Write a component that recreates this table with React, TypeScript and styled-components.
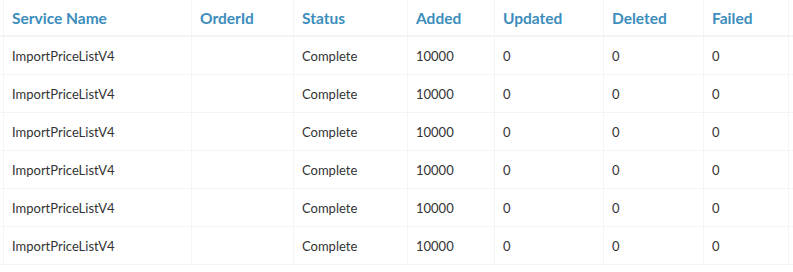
import React from "react";
import styled, { createGlobalStyle } from "styled-components";

const Global = createGlobalStyle`
  html, body { margin: 0; padding: 0; background: #fff; overflow: hidden; }
  body { font-family: Lato, "Noto Sans", sans-serif; }
`;

const Table = styled.table`
  border-collapse: collapse;
  table-layout: fixed;
  width: 800px;
  margin-left: -1px;
  font-size: 13px;
  color: #333;
`;

const Th = styled.th<{ $w: number; $edge?: boolean }>`
  width: ${(p) => p.$w}px;
  height: 36px;
  padding: ${(p) => (p.$edge ? "0" : "0 8px")};
  text-align: left;
  font-size: 15.5px;
  font-weight: 700;
  color: #3c8dbc;
  border-left: 1px solid #f4f4f4;
  border-bottom: 2px solid #f4f4f4;
  box-sizing: border-box;
  white-space: nowrap;
`;

const Td = styled.td<{ $edge?: boolean }>`
  height: 37px;
  padding: ${(p) => (p.$edge ? "0" : "0 8px")};
  border-left: 1px solid #f4f4f4;
  border-bottom: 1px solid #f4f4f4;
  white-space: nowrap;
  overflow: hidden;
`;

const cols: [string, number][] = [
  ["", 4],
  ["Service Name", 188],
  ["OrderId", 102],
  ["Status", 114],
  ["Added", 87],
  ["Updated", 109],
  ["Deleted", 100],
  ["Failed", 85],
  ["", 11],
];

const rows = Array.from({ length: 6 }, () => [
  "",
  "ImportPriceListV4",
  "",
  "Complete",
  "10000",
  "0",
  "0",
  "0",
  "",
]);

export default function App() {
  return (
    <>
      <Global />
      <Table>
        <thead>
          <tr>
            {cols.map(([name, w], i) => (
              <Th key={i} $w={w} $edge={i === 0 || i === cols.length - 1}>
                {name}
              </Th>
            ))}
          </tr>
        </thead>
        <tbody>
          {rows.map((r, i) => (
            <tr key={i}>
              {r.map((c, j) => (
                <Td key={j} $edge={j === 0 || j === r.length - 1}>
                  {c}
                </Td>
              ))}
            </tr>
          ))}
        </tbody>
      </Table>
    </>
  );
}
